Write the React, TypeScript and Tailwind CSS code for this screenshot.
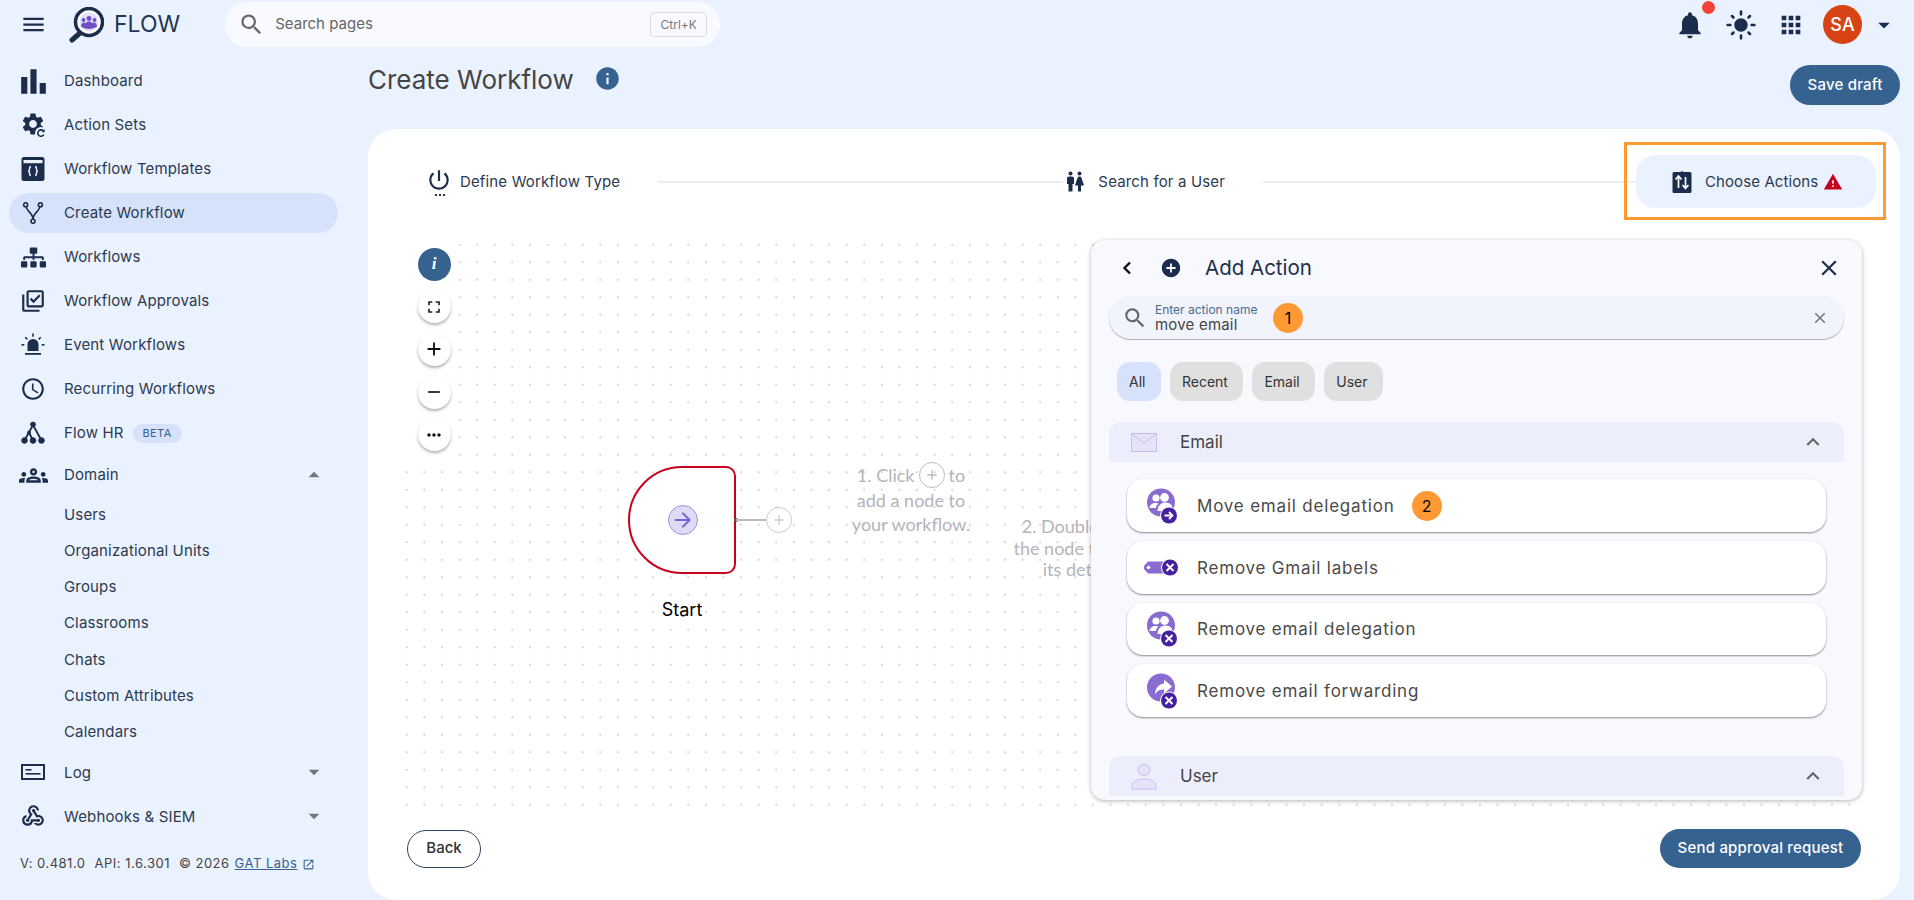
import {
  MdMenu,
  MdSearch,
  MdNotifications,
  MdLightMode,
  MdApps,
  MdArrowDropDown,
  MdArrowDropUp,
  MdInfo,
  MdBarChart,
  MdSettings,
  MdOutlineLibraryAddCheck,
  MdAccessTime,
  MdOutlineGroups,
  MdWebhook,
  MdOutlineOpenInNew,
  MdPowerSettingsNew,
  MdWc,
  MdWarning,
  MdAddCircle,
  MdClose,
  MdExpandLess,
  MdFullscreen,
  MdAdd,
  MdRemove,
  MdMoreHoriz,
  MdArrowForward,
} from "react-icons/md";
import { FaSitemap } from "react-icons/fa";

const navy = "#1b2d4a";

const ActionSetsIcon = () => (
  <span className="relative block h-6 w-6">
    <MdSettings size={26} color={navy} className="absolute -left-[1px] -top-[2px]" />
    <svg viewBox="0 0 12 12" className="absolute -right-[2px] -bottom-[2px] h-3 w-3">
      <circle cx="6" cy="6" r="6" fill="#ebf2ff" />
      <path d="M8.6 4.2A3.2 3.2 0 1 0 8.8 7.6" fill="none" stroke={navy} strokeWidth="1.6" />
      <path d="M9.6 2v3.2H6.6z" fill={navy} />
    </svg>
  </span>
);

const TemplatesIcon = () => (
  <svg viewBox="0 0 24 24" className="h-6 w-6">
    <rect x="0.5" y="0" width="23" height="24" rx="2.5" fill={navy} />
    <rect x="2.5" y="3" width="19" height="3.2" fill="#ebf2ff" />
    <path d="M10 9.5c-1.8 0-1.4 2.4-1.6 3.4-.2.8-1 1.1-1.4 1.1.4 0 1.2.3 1.4 1.1.2 1-.2 3.4 1.6 3.4M14 9.5c1.8 0 1.4 2.4 1.6 3.4.2.8 1 1.1 1.4 1.1-.4 0-1.2.3-1.4 1.1-.2 1 .2 3.4-1.6 3.4" fill="none" stroke="#ebf2ff" strokeWidth="1.5" />
  </svg>
);

const ForkIcon = () => (
  <svg viewBox="0 0 24 24" className="h-[22px] w-[22px]" fill="none" stroke={navy} strokeWidth="1.8">
    <circle cx="4" cy="3" r="2.2" />
    <circle cx="20" cy="3" r="2.2" />
    <circle cx="12" cy="21" r="2.2" />
    <path d="M4.500 5.200c.5 5 7.500 7 7.500 13.600M19.500 5.200c-.5 5-7.500 7-7.500 13.600" />
  </svg>
);

const AlarmIcon = () => (
  <svg viewBox="0 0 24 24" className="h-6 w-6" fill={navy}>
    <path d="M6.5 18v-6.5a5.5 5.5 0 0 1 11 0V18z" />
    <rect x="4" y="20" width="16" height="1.8" />
    <rect x="11.2" y="0.5" width="1.6" height="3.2" />
    <rect x="0.5" y="11" width="2.8" height="1.6" />
    <rect x="20.7" y="11" width="2.8" height="1.6" />
    <path d="M3.7 4.8l1.1-1.1 2.1 2.1-1.1 1.1zM20.3 4.8l-1.1-1.1-2.1 2.1 1.1 1.1z" />
  </svg>
);

const HrIcon = () => (
  <svg viewBox="0 0 24 24" className="h-6 w-6" fill={navy} stroke={navy}>
    <circle cx="12" cy="3.5" r="2.4" />
    <circle cx="3.5" cy="19.5" r="2.8" />
    <circle cx="12" cy="19.5" r="2.8" />
    <circle cx="20.5" cy="19.5" r="2.8" />
    <circle cx="8" cy="11.5" r="1.5" />
    <path d="M12 4L3.5 19.5M12 4l8.5 15.5M8 11.5l4 8" fill="none" strokeWidth="1.8" />
  </svg>
);

const LogIcon = () => (
  <svg viewBox="0 0 24 24" className="h-6 w-6" fill="none">
    <rect x="1" y="5" width="22" height="14" stroke={navy} strokeWidth="2" />
    <rect x="4.5" y="9" width="6" height="1.6" fill={navy} />
    <rect x="4.5" y="13" width="15" height="1.6" fill={navy} />
  </svg>
);

const LogoIcon = () => (
  <svg viewBox="0 0 36 36" className="h-[36px] w-[36px]">
    <path d="M12 26L4 33" stroke={navy} strokeWidth="5" strokeLinecap="round" />
    <circle cx="21" cy="15" r="13.5" fill="#fff" stroke={navy} strokeWidth="3.5" />
    <circle cx="21" cy="15" r="9.5" fill="#e4dff8" />
    <circle cx="21" cy="11.5" r="2.4" fill="#6f4fc4" />
    <circle cx="15.5" cy="13" r="1.9" fill="#6f4fc4" />
    <circle cx="26.500" cy="13" r="1.9" fill="#6f4fc4" />
    <path d="M13 19.500c0-2.500 1.500-4 3-4l2 .5c.5-1 1.500-1.500 3-1.500s2.500.5 3 1.500l2-.5c1.500 0 3 1.500 3 4-2 1.500-5 2.500-8 2.500s-6-1-8-2.500z" fill="#6f4fc4" />
  </svg>
);

const StepActionIcon = () => (
  <svg viewBox="0 0 20 23" className="h-[23px] w-[20px]">
    <path d="M2 2h7l1-1.500 1 1.500h7a1.500 1.500 0 0 1 1.500 1.500v18a1.500 1.500 0 0 1-1.500 1.500H2a1.500 1.500 0 0 1-1.500-1.500v-18A1.500 1.500 0 0 1 2 2z" fill={navy} />
    <path d="M6.500 18V7M3.500 9.500l3-3.500 3 3.500M13.500 7v11M10.500 15l3 3.500 3-3.500" fill="none" stroke="#fff" strokeWidth="1.700" />
  </svg>
);

const PowerIcon = () => (
  <span className="relative block h-6 w-6">
    <MdPowerSettingsNew size={26} color={navy} className="absolute -left-[1px] -top-[3px]" />
    <span className="absolute left-[7.500px] top-[24px] block h-[2px] w-[10px] bg-[repeating-linear-gradient(90deg,#1b2d4a_0_2px,transparent_2px_4px)]" />
  </span>
);

const MailIcon = () => (
  <svg viewBox="0 0 26 19" className="h-[19px] w-[26px]">
    <rect x="0.500" y="0.500" width="25" height="18" fill="#e6e3f8" stroke="#c4bdee" />
    <path d="M1 1l12 9 12-9" fill="none" stroke="#c4bdee" />
  </svg>
);

const UserIcon = () => (
  <svg viewBox="0 0 26 27" className="h-[27px] w-[26px]" fill="#e6e3f8" stroke="#c4bdee">
    <circle cx="13" cy="7" r="5.800" />
    <path d="M1 26v-3c0-4 5-7 12-7s12 3 12 7v3z" />
  </svg>
);

const Badge = ({ kind, cx, cy }: { kind: "x" | "arrow"; cx: number; cy: number }) => (
  <g>
    <circle cx={cx} cy={cy} r="9" fill="#fff" />
    <circle cx={cx} cy={cy} r="8" fill="#45209f" />
    {kind === "x" ? (
      <path d={`M${cx - 3.500} ${cy - 3.500}l7 7m0-7l-7 7`} stroke="#fff" strokeWidth="2" />
    ) : (
      <path d={`M${cx - 4.500} ${cy}h8m-3.500-3.500l3.500 3.500-3.500 3.500`} fill="none" stroke="#fff" strokeWidth="1.800" />
    )}
  </g>
);

const PeopleIcon = ({ kind }: { kind: "x" | "arrow" }) => (
  <svg viewBox="0 0 34 36" className="h-9 w-[34px]">
    <circle cx="17" cy="14.500" r="14" fill="#8a6bd1" />
    <circle cx="12" cy="10" r="3.600" fill="#fff" />
    <circle cx="20.500" cy="9.500" r="4.400" fill="#fff" />
    <path d="M5.500 20c0-3 3-5 6-5 1.500 0 2.500.3 3 .8-1.500 1-2.500 2.500-2.500 4.200z" fill="#fff" />
    <path d="M13.500 23c0-5 3.500-8.500 7.500-8.500 3 0 5.500 1 7 3l-2 5.500z" fill="#fff" />
    <Badge kind={kind} cx={25} cy={27.500} />
  </svg>
);

const TagIcon = () => (
  <svg viewBox="0 0 34 36" className="h-9 w-[34px]">
    <path d="M4 11.500h24v12H4l-4-4.500v-3z" fill="#8a6bd1" />
    <circle cx="4.500" cy="17.500" r="1.800" fill="#fff" />
    <Badge kind="x" cx={26} cy={17.500} />
  </svg>
);

const ForwardIcon = () => (
  <svg viewBox="0 0 34 36" className="h-9 w-[34px]">
    <circle cx="17" cy="14.500" r="14" fill="#8a6bd1" />
    <path d="M20 6.500l8 7-8 7v-4c-4 0-7 1-9 5 0-6 3-10 9-11z" fill="#fff" />
    <Badge kind="x" cx={25} cy={27.500} />
  </svg>
);

const navTop = [
  { label: "Dashboard", icon: <MdBarChart size={37} color={navy} /> },
  { label: "Action Sets", icon: <ActionSetsIcon /> },
  { label: "Workflow Templates", icon: <TemplatesIcon /> },
  { label: "Create Workflow", icon: <ForkIcon />, active: true },
  { label: "Workflows", icon: <FaSitemap size={25} color={navy} /> },
  { label: "Workflow Approvals", icon: <MdOutlineLibraryAddCheck size={26} color={navy} /> },
  { label: "Event Workflows", icon: <AlarmIcon /> },
  { label: "Recurring Workflows", icon: <MdAccessTime size={26} color={navy} /> },
];

const domainLinks = ["Users", "Organizational Units", "Groups", "Classrooms", "Chats", "Custom Attributes", "Calendars"];

const NavRow = ({ label, icon, active, children }: { label: string; icon: React.ReactNode; active?: boolean; children?: React.ReactNode }) => (
  <div className="flex h-[44px] items-center pl-[9px] pr-[30px]">
    <div className={`flex h-[40px] flex-1 items-center rounded-[20px] pl-[12px] ${active ? "bg-[#d6e2f9]" : ""}`}>
      <span className="flex h-[24px] w-[24px] items-center justify-center [&>svg]:shrink-0">{icon}</span>
      <span className="ml-[19px] text-[15px] tracking-[0.15px] text-[#2c3a50]">{label}</span>
      {children}
    </div>
  </div>
);

const CardRow = ({ icon, label, badge, short }: { icon: React.ReactNode; label: string; badge?: string; short?: boolean }) => (
  <div className={`flex items-center rounded-[16px] bg-white pl-[17px] shadow-[0_1px_2px_rgba(0,0,0,0.45)] ${short ? "h-[52px]" : "h-[53px]"}`}>
    <span className="flex w-[34px] items-center justify-center">{icon}</span>
    <span className="ml-[19px] pt-[2px] text-[17px] tracking-[0.8px] text-[#4a4a4a]">{label}</span>
    {badge && (
      <span className="ml-[17px] flex h-[30px] w-[30px] items-center justify-center rounded-full bg-[#ff9933] text-[16px] text-black">{badge}</span>
    )}
  </div>
);

const Chip = ({ label, active }: { label: string; active?: boolean }) => (
  <span className={`flex h-[39px] items-center rounded-[13px] pl-[12px] pr-[15.500px] text-[14px] text-[#333] ${active ? "bg-[#d6e2fb]" : "bg-[#e0e0e0]"}`}>{label}</span>
);

const CanvasButton = ({ children }: { children: React.ReactNode }) => (
  <span className="flex h-[33px] w-[33px] items-center justify-center rounded-full bg-white shadow-[0_2px_3px_rgba(0,0,0,0.3)]">{children}</span>
);

const App = () => {
  return (
    <div className="flex h-[900px] w-full flex-col overflow-hidden bg-[#ebf2ff] font-['Inter',sans-serif]">
      {/* top bar */}
      <header className="flex h-[49px] shrink-0 items-center pl-[20px] pr-[16px]">
        <MdMenu size={27} color={navy} />
        <span className="ml-[21px]"><LogoIcon /></span>
        <span className="ml-[10px] text-[23px] text-[#1f3654]">FLOW</span>
        <div className="ml-[45px] flex h-[45px] w-[495px] items-center rounded-full bg-[#f8faff] pl-[13px] pr-[13px]">
          <MdSearch size={27} color="#666" />
          <span className="ml-[10px] text-[15px] text-[#666]">Search pages</span>
          <span className="ml-auto flex h-[25px] w-[57px] items-center justify-center rounded-[4px] border border-[#ddd] text-[12px] text-[#777]">Ctrl+K</span>
        </div>
        <div className="ml-auto flex items-center">
          <span className="relative">
            <MdNotifications size={32} color={navy} />
            <span className="absolute -right-[9px] -top-[8px] h-[13px] w-[13px] rounded-full bg-[#f44336]" />
          </span>
          <span className="ml-[19px]"><MdLightMode size={32} color={navy} /></span>
          <span className="ml-[20px]"><MdApps size={28} color={navy} /></span>
          <span className="ml-[18px] flex h-[39px] w-[39px] items-center justify-center rounded-full bg-[#d84315] text-[18px] font-medium text-white">SA</span>
          <span className="ml-[8px]"><MdArrowDropDown size={28} color={navy} /></span>
        </div>
      </header>

      <div className="flex min-h-0 flex-1">
        {/* sidebar */}
        <aside className="w-[368px] shrink-0 pt-[10px]">
          {navTop.map((n) => (
            <NavRow key={n.label} label={n.label} icon={n.icon} active={n.active} />
          ))}
          <NavRow label="Flow HR" icon={<HrIcon />}>
            <span className="ml-[9px] flex h-[19px] w-[49px] items-center justify-center rounded-full bg-[#d6e2f9] text-[11px] tracking-[0.4px] text-[#366290]">BETA</span>
          </NavRow>
          <div className="flex h-[40px] items-center pl-[21px] pr-[41px]">
            <span className="flex w-[24px] items-center justify-center [&>svg]:shrink-0"><MdOutlineGroups size={29} color={navy} /></span>
            <span className="ml-[19px] text-[15px] tracking-[0.15px] text-[#2c3a50]">Domain</span>
            <span className="ml-auto"><MdArrowDropUp size={26} color="#757575" /></span>
          </div>
          <div className="mt-[2px]">
            {domainLinks.map((l) => (
              <div key={l} className="flex h-[36.200px] items-center pl-[64px] text-[15px] tracking-[0.15px] text-[#2c3a50]">{l}</div>
            ))}
          </div>
          <div className="flex h-[44px] items-center pl-[21px] pr-[41px]">
            <span className="flex w-[24px] items-center justify-center"><LogIcon /></span>
            <span className="ml-[19px] pt-[1px] text-[15px] tracking-[0.15px] text-[#2c3a50]">Log</span>
            <span className="ml-auto"><MdArrowDropDown size={26} color="#757575" /></span>
          </div>
          <div className="flex h-[44px] items-center pl-[21px] pr-[41px]">
            <span className="flex w-[24px] items-center justify-center [&>svg]:shrink-0"><MdWebhook size={26} color={navy} /></span>
            <span className="ml-[19px] pt-[1px] text-[15px] tracking-[0.15px] text-[#2c3a50]">Webhooks &amp; SIEM</span>
            <span className="ml-auto"><MdArrowDropDown size={26} color="#757575" /></span>
          </div>
          <div className="mt-[16px] flex items-center pl-[20px] text-[13px] tracking-[0.5px] text-[#444]">
            <span>V: 0.481.0</span>
            <span className="ml-[9px]">API: 1.6.301</span>
            <span className="ml-[9px]">© 2026</span>
            <span className="ml-[5px] text-[#366290] underline">GAT Labs</span>
            <span className="ml-[5px]"><MdOutlineOpenInNew size={13} color="#366290" /></span>
          </div>
        </aside>

        {/* main */}
        <main className="flex min-w-0 flex-1 flex-col pr-[14px]">
          <div className="flex h-[80px] shrink-0 items-start pt-[16px]">
            <h1 className="text-[26px] leading-[30px] text-[#444]">Create Workflow</h1>
            <span className="ml-[20px]"><MdInfo size={27} color="#366290" /></span>
            <button className="ml-auto h-[40px] w-[110px] rounded-full bg-[#366290] text-[15px] font-medium tracking-[0.2px] text-white">Save draft</button>
          </div>

          <div className="flex flex-1 flex-col rounded-[28px] bg-white pt-[26px]">
            {/* stepper */}
            <div className="flex h-[53px] items-center pl-[59px] pr-[24px]">
              <PowerIcon />
              <span className="ml-[9px] pt-[1px] text-[15px] tracking-[0.15px] text-[#2c3a50]">Define Workflow Type</span>
              <span className="ml-[38px] h-[2px] flex-1 bg-[#eee]" />
              <span className="flex w-[24px] justify-center"><MdWc size={27} color={navy} /></span>
              <span className="ml-[11px] pt-[1px] text-[15px] tracking-[0.15px] text-[#2c3a50]">Search for a User</span>
              <span className="ml-[38px] h-[2px] w-[373px] bg-[#eee]" />
              <div className="relative flex h-[53px] w-[240px] items-center rounded-[20px] bg-[#ebf2ff] pl-[36px]">
                <StepActionIcon />
                <span className="ml-[13px] pt-[1px] text-[15px] tracking-[0.1px] text-[#2c3a50]">Choose Actions</span>
                <span className="ml-[5px]"><MdWarning size={20} color="#c4001d" /></span>
                <span className="absolute -left-[12px] -right-[10px] -top-[13px] -bottom-[12px] border-[3px] border-[#ff9933]" />
              </div>
            </div>

            {/* canvas */}
            <div className="relative ml-[30px] mr-[38px] mt-[32px] h-[570px] shrink-0 bg-[radial-gradient(circle,#c6c6c6_0.6px,transparent_0.9px)] bg-[length:17.600px_17.500px] bg-[position:0_-4px]">
              <div className="absolute left-0 top-0 flex h-[216px] w-[54px] flex-col gap-[9.700px] bg-white pl-[19.500px] pt-[7.500px]">
                <span className="flex h-[33px] w-[33px] items-center justify-center rounded-full bg-[#366290] font-['Liberation_Serif',serif] text-[17px] font-bold italic text-white">i</span>
                <CanvasButton><MdFullscreen size={20} color="#222" /></CanvasButton>
                <CanvasButton><MdAdd size={22} color="#111" /></CanvasButton>
                <CanvasButton><MdRemove size={20} color="#111" /></CanvasButton>
                <CanvasButton><MdMoreHoriz size={20} color="#111" /></CanvasButton>
              </div>

              {/* start node */}
              <div className="absolute left-[230px] top-[226px] flex h-[108px] w-[108px] items-center rounded-l-[54px] rounded-r-[10px] border-2 border-[#c8001e] bg-white pl-[38px]">
                <span className="flex h-[30px] w-[30px] items-center justify-center rounded-full border border-[#9d92e2] bg-[#dedbf6]"><MdArrowForward size={24} color="#7c66d3" /></span>
              </div>
              <span className="absolute left-[336px] top-[278px] h-[4px] w-[4px] rounded-full bg-[#555]" />
              <span className="absolute left-[338px] top-[279px] h-[2px] w-[30px] bg-[#bbb]" />
              <span className="absolute left-[368px] top-[267px] flex h-[26px] w-[26px] items-center justify-center rounded-full border border-[#ccc] bg-white"><MdAdd size={16} color="#ccc" /></span>
              <span className="absolute left-[224px] top-[356px] w-[120px] text-center text-[18px] text-black">Start</span>

              {/* hints */}
              <div className="absolute left-[443px] top-[222px] w-[140px] text-center font-['Lato',sans-serif] text-[18px] leading-[24px] text-[#b4b4ba]">
                <div className="flex items-center justify-center gap-[4px]">
                  1. Click
                  <span className="flex h-[26px] w-[26px] items-center justify-center rounded-full border border-[#bbb]"><MdAdd size={16} color="#bbb" /></span>
                  to
                </div>
                <div>add a node to</div>
                <div>your workflow.</div>
              </div>
              <div className="absolute left-[592px] top-[276px] w-[180px] text-center font-['Lato',sans-serif] text-[18px] leading-[21.500px] text-[#b4b4ba]">
                <div>2. Double click</div>
                <div>the node to view</div>
                <div>its details</div>
              </div>

              {/* add action panel */}
              <div className="absolute left-[693px] top-0 h-[560px] w-[771px] overflow-hidden rounded-[14px] bg-[#f8f9ff] shadow-[0_1px_4px_rgba(0,0,0,0.3)]">
                <div className="flex h-[56px] items-center pl-[31px] pr-[20px]">
                  <svg viewBox="0 0 10 14" className="h-[14px] w-[10px]" fill="none" stroke="#111" strokeWidth="2.400"><path d="M8 1.500L2.500 7 8 12.500" /></svg>
                  <span className="ml-[28px]"><MdAddCircle size={22} color={navy} /></span>
                  <span className="ml-[23px] text-[20.500px] text-[#1f2f48]">Add Action</span>
                  <span className="ml-auto"><MdClose size={26} color={navy} /></span>
                </div>

                <div className="mx-[18px] flex h-[43px] items-center rounded-full bg-[#f1f4fc] pl-[13px] pr-[15px] shadow-[0_1px_1px_rgba(0,0,0,0.3)]">
                  <MdSearch size={26} color="#666" />
                  <div className="ml-[7px] flex w-[118px] flex-col">
                    <span className="text-[12px] leading-[15px] text-[#4a6a90]">Enter action name</span>
                    <span className="text-[15px] leading-[16px] tracking-[0.2px] text-[#444]">move email</span>
                  </div>
                  <span className="flex h-[30px] w-[30px] items-center justify-center rounded-full bg-[#ff9933] text-[16px] text-black">1</span>
                  <span className="ml-auto"><MdClose size={18} color="#777" /></span>
                </div>

                <div className="ml-[26px] mt-[23px] flex gap-[9px]">
                  <Chip label="All" active />
                  <Chip label="Recent" />
                  <Chip label="Email" />
                  <Chip label="User" />
                </div>

                <div className="mx-[18px] mt-[21px] flex h-[40px] items-center rounded-t-[12px] bg-[#eceffb] pl-[22px] pr-[18px]">
                  <MailIcon />
                  <span className="ml-[23px] pt-[1px] text-[17px] text-[#444]">Email</span>
                  <span className="ml-auto"><MdExpandLess size={26} color="#666" /></span>
                </div>

                <div className="mx-[36px] mt-[17px] flex flex-col gap-[9px]">
                  <CardRow icon={<PeopleIcon kind="arrow" />} label="Move email delegation" badge="2" />
                  <CardRow icon={<TagIcon />} label="Remove Gmail labels" />
                  <CardRow icon={<PeopleIcon kind="x" />} label="Remove email delegation" short />
                  <CardRow icon={<ForwardIcon />} label="Remove email forwarding" />
                </div>

                <div className="mx-[18px] mt-[39px] flex h-[40px] items-center rounded-t-[12px] bg-[#eceffb] pl-[22px] pr-[18px]">
                  <UserIcon />
                  <span className="ml-[23px] pt-[1px] text-[17px] text-[#444]">User</span>
                  <span className="ml-auto"><MdExpandLess size={26} color="#666" /></span>
                </div>
              </div>
            </div>

            {/* footer */}
            <div className="mt-[19px] flex items-center justify-between px-[39px]">
              <button className="h-[38px] w-[74px] rounded-full border-[1.500px] border-[#2f4460] text-[15px] font-medium text-[#333]">Back</button>
              <button className="h-[39px] w-[201px] rounded-full bg-[#366290] text-[15px] font-medium tracking-[0.2px] text-white">Send approval request</button>
            </div>
          </div>
        </main>
      </div>
    </div>
  );
};

export default App;
